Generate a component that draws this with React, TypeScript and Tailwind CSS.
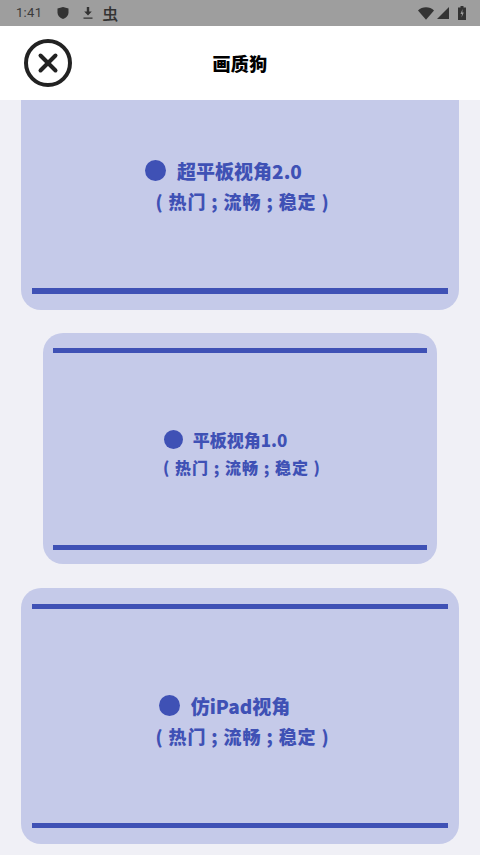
import { X } from 'lucide-react';

const cjk = { fontFamily: '"Noto Sans CJK SC", "Liberation Sans", sans-serif' };

function Line({ className }: { className: string }) {
  return <div className={`bg-[#3f51b5] ${className}`} />;
}

function StatusBar() {
  return (
    <div className="flex h-[26px] items-center justify-between bg-[#9e9e9e] pl-4 pr-[14px] text-[#333]">
      <div className="flex items-center">
        <span className="text-[13px] tracking-[0.3px] text-[#3a3a3a]" style={{ fontFamily: 'Roboto, sans-serif' }}>
          1:41
        </span>
        <svg viewBox="0 0 14 14" className="ml-[14px] h-[14px] w-[14px]" fill="#333">
          <path d="M7 1l5.5 1.6v4.2c0 3-2.3 5.2-5.5 6.2-3.2-1-5.5-3.2-5.5-6.2V2.600z" />
        </svg>
        <svg viewBox="0 0 14 14" className="ml-[11px] h-[14px] w-[14px]" fill="#333">
          <path d="M5.800 1h2.400v4.500h2.600L7 9.600 3.200 5.500h2.600zM2.500 11.500h9v1.300h-9z" />
        </svg>
        <span className="ml-[7px] text-[16px] font-medium leading-none text-[#333]" style={cjk}>
          虫
        </span>
      </div>
      <div className="flex items-center gap-[3px]">
        <svg viewBox="0 0 18 14" className="h-[13px] w-[16px]" fill="#333">
          <path d="M0 3.500C2.500 1.300 5.500 0 9 0s6.500 1.300 9 3.500L9 14z" />
        </svg>
        <svg viewBox="0 0 12 12" className="h-[12px] w-[12px]" fill="#333">
          <path d="M12 0v12H0z" />
        </svg>
        <svg viewBox="0 0 8 14" className="ml-[6px] h-[14px] w-[8px]" fill="#333">
          <path d="M2.500 0h3v1.500H8V14H0V1.500h2.500z" />
          <path d="M4.500 3L2.500 8h1.500l-.500 3.500L5.800 6.500H4.300z" fill="#9e9e9e" />
        </svg>
      </div>
    </div>
  );
}

function Label({
  title,
  dot,
  className,
  titleClass,
  subClass,
}: {
  title: string;
  dot: string;
  className: string;
  titleClass: string;
  subClass: string;
}) {
  return (
    <div className={`flex flex-col items-center font-black text-[#3f51b5] ${className}`} style={cjk}>
      <div className={`flex items-center ${titleClass}`}>
        <span className={`shrink-0 rounded-full bg-[#3f51b5] ${dot}`} />
        <span className="leading-none">{title}</span>
      </div>
      <div className={`whitespace-pre leading-none ${subClass}`}>( 热门 ; 流畅 ; 稳定 )</div>
    </div>
  );
}

export default function App() {
  return (
    <div className="flex h-[855px] w-[480px] flex-col overflow-hidden bg-[#f0f0f6]">
      <StatusBar />
      <header className="relative flex h-[74px] shrink-0 items-center justify-center bg-white">
        <div className="absolute left-[24px] top-[13px] flex h-[48px] w-[48px] items-center justify-center rounded-full border-[4px] border-[#222]">
          <X size={30} strokeWidth={3.2} color="#222" />
        </div>
        <h1 className="text-[18px] font-black tracking-[0.3px] text-black" style={cjk}>
          画质狗
        </h1>
      </header>

      <section className="mx-[21px] flex h-[210px] shrink-0 flex-col rounded-b-[20px] bg-[#c5cae9] px-[11px] pb-[16px]">
        <Label
          title="超平板视角2.0"
          dot="mr-[11px] h-[21px] w-[21px]"
          className="mt-[60px] flex-1"
          titleClass="pr-[33px] text-[19px]"
          subClass="mt-[11px] pl-[5px] text-[18px] tracking-[0.9px]"
        />
        <Line className="h-[6px]" />
      </section>

      <section className="mx-[43px] mt-[23px] flex h-[231px] shrink-0 flex-col rounded-[20px] bg-[#c5cae9] px-[10px] pb-[14px] pt-[15px]">
        <Line className="h-[5px]" />
        <Label
          title="平板视角1.0"
          dot="mr-[10px] h-[19px] w-[19px]"
          className="mt-[77px] flex-1"
          titleClass="pr-[29px] text-[17px]"
          subClass="mt-[10px] pl-[4px] text-[16px] tracking-[1px]"
        />
        <Line className="h-[5px]" />
      </section>

      <section className="mx-[21px] mt-[24px] flex h-[256px] shrink-0 flex-col rounded-[20px] bg-[#c5cae9] px-[11px] py-[16px]">
        <Line className="h-[5px]" />
        <Label
          title="仿iPad视角"
          dot="mr-[11px] h-[21px] w-[21px]"
          className="mt-[86px] flex-1"
          titleClass="pr-[31px] text-[19px]"
          subClass="mt-[11px] pl-[5px] text-[18px] tracking-[0.9px]"
        />
        <Line className="h-[5px]" />
      </section>
    </div>
  );
}
